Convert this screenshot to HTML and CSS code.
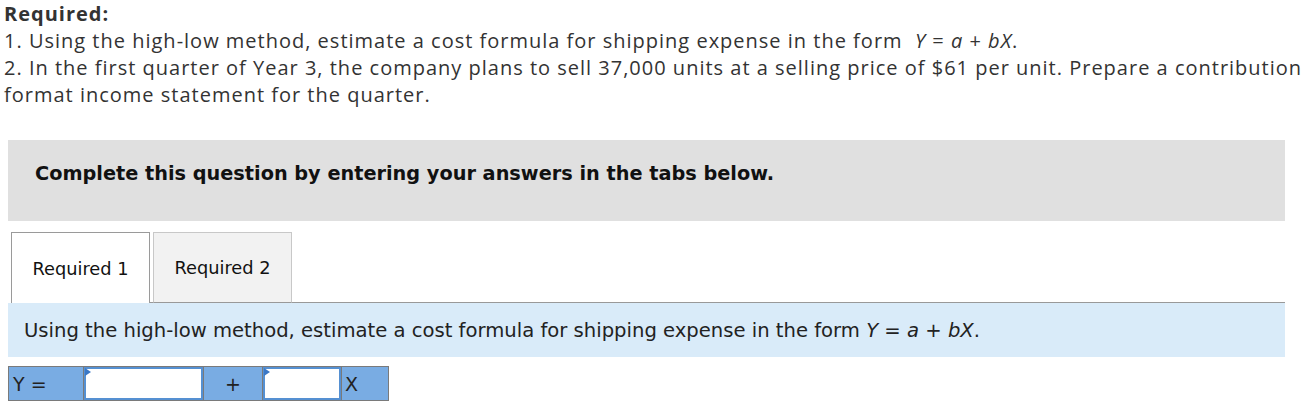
FILE: index.html
```html
<!DOCTYPE html>
<html>
<head>
<meta charset="utf-8">
<link rel="stylesheet" href="styles.css">
</head>
<body>
<div class="required">
  <div class="req-title">Required:</div>
  <div class="req-line">1. Using the high-low method, estimate a cost formula for shipping expense in the form&nbsp; <i>Y</i> = <i>a</i> + <i>bX</i>.</div>
  <div class="req-line">2. In the first quarter of Year 3, the company plans to sell 37,000 units at a selling price of $61 per unit. Prepare a contribution format income statement for the quarter.</div>
</div>
<div class="question">
  <div class="instruct"><span>Complete this question by entering your answers in the tabs below.</span></div>
  <div class="tabs">
    <div class="tab active"><span>Required 1</span></div>
    <div class="tab"><span>Required 2</span></div>
  </div>
  <div class="prompt"><span>Using the high-low method, estimate a cost formula for shipping expense in the form <i>Y</i> = <i>a</i> + <i>bX</i>.</span></div>
  <div class="formula-row">
    <div class="cell label"><span>Y =</span></div>
    <div class="cell input in1"><span class="flag"></span></div>
    <div class="cell op"><span>+</span></div>
    <div class="cell input in2"><span class="flag"></span></div>
    <div class="cell label x"><span>X</span></div>
  </div>
</div>
</body>
</html>
```

FILE: styles.css
```css
* { box-sizing: border-box; }
html, body { margin: 0; padding: 0; background: #fff; }
body { width: 1312px; height: 402px; overflow: hidden; }

.required {
  padding: 0 0 0 4px;
  font-family: "Open Sans", "Liberation Sans", sans-serif;
  font-size: 20px;
  letter-spacing: 1px;
  line-height: 27px;
  color: #333;
  width: 1312px;
}
.req-title { font-weight: bold; letter-spacing: 1px; }

.question {
  margin: 32px 0 0 8px;
  width: 1277px;
  font-family: "DejaVu Sans", sans-serif;
  color: #111;
}
.instruct {
  background: #e0e0e0;
  height: 81px;
  padding: 0 0 14px 27px;
  display: flex;
  align-items: center;
  font-weight: bold;
  font-size: 19.3px;
}
.tabs {
  margin-top: 11px;
  height: 71px;
  display: flex;
  padding-left: 3px;
  gap: 3px;
  background: linear-gradient(#999, #999) no-repeat 142px 100% / calc(100% - 142px) 1px;
}
.tab {
  width: 139px;
  height: 71px;
  display: flex;
  align-items: center;
  justify-content: center;
  font-size: 17.8px;
  background: #f2f2f2;
  border: 1px solid #c8c8c8;
  border-bottom: 1px solid #999;
}
.tab.active {
  background: #fff;
  border: 1px solid #9a9a9a;
  border-bottom: 0;
}
.prompt {
  background: #d9ebf9;
  height: 54px;
  padding: 0 0 0 16px;
  display: flex;
  align-items: center;
  font-size: 19.6px;
  color: #222;
}
.formula-row {
  margin-top: 9px;
  display: flex;
  width: 381px;
  height: 35px;
  border: 1px solid #7a7a7a;
  font-size: 19px;
  color: #222;
}
.cell {
  height: 100%;
  border-right: 1px solid #7a7a7a;
  background: #79ace3;
  display: flex;
  align-items: center;
}
.cell:last-child { border-right: 0; }
.label { width: 75px; padding-left: 4px; }
.input {
  position: relative;
  background: #fff;
  box-shadow: inset 0 0 0 2px #5590d2;
}
.in1 { width: 120px; }
.in2 { width: 79px; }
.op { width: 59px; justify-content: center; }
.x { width: 46px; padding-left: 3px; }
.flag {
  position: absolute;
  left: 1px;
  top: 1px;
  width: 6px;
  height: 8px;
  background: #3b78c6;
  clip-path: polygon(0 0, 100% 50%, 0 100%);
}
```
